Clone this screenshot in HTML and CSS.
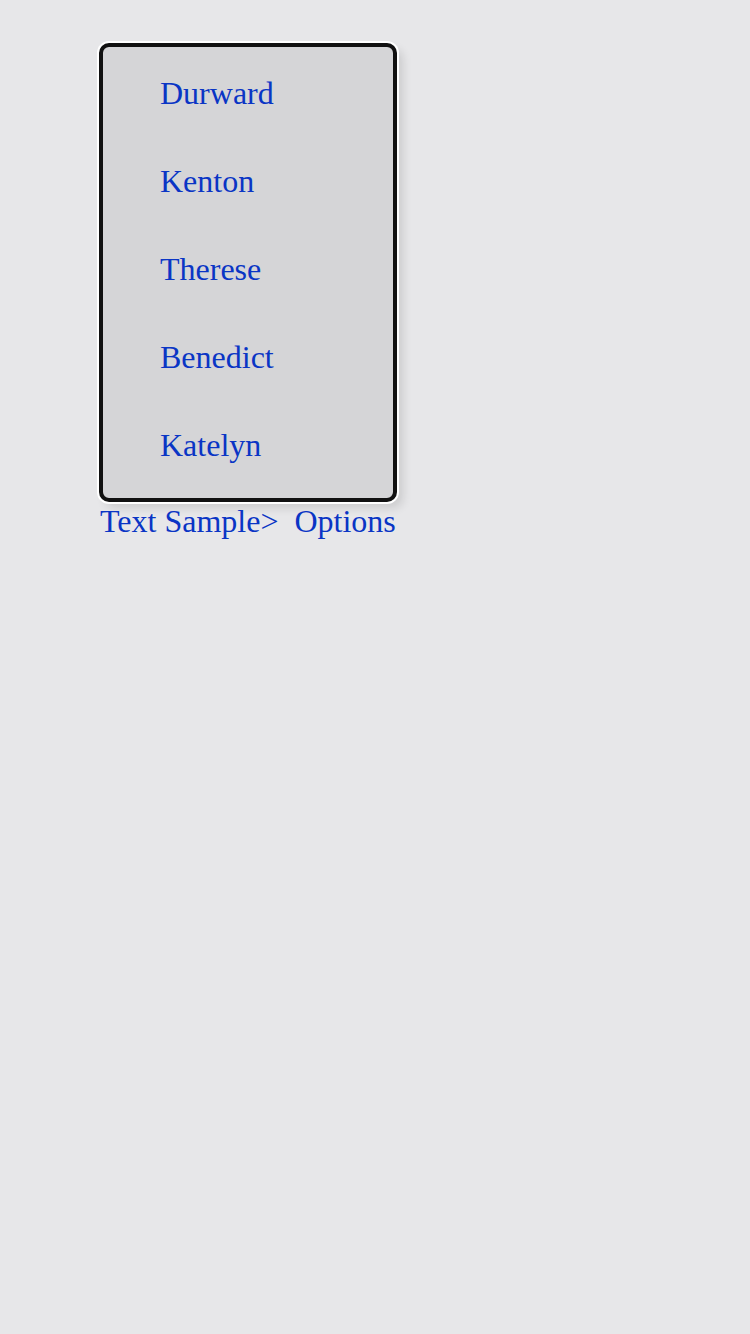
FILE: index.html
```html
<!DOCTYPE html>
<html>
<head>
<meta charset="utf-8">
<link rel="stylesheet" href="styles.css">
</head>
<body>
<div class="wrap">
  <ul class="menu">
    <li class="item">Durward</li>
    <li class="item">Kenton</li>
    <li class="item">Therese</li>
    <li class="item">Benedict</li>
    <li class="item">Katelyn</li>
  </ul>
  <div class="trail"><span>Text Sample&gt;</span> <span class="opt">Options</span></div>
</div>
</body>
</html>
```
FILE: styles.css
```css
html, body {
  margin: 0;
  padding: 0;
  background: #e7e7e9;
  height: 100%;
}
body {
  font-family: "Liberation Serif", "Times New Roman", serif;
  color: #0a35c5;
}
.wrap {
  padding: 43px 0 0 100px;
}
.menu {
  list-style: none;
  margin: 0 0 0 -1px;
  padding: 2px 0 9px 0;
  width: 290px;
  border: 4px solid #111;
  border-radius: 10px;
  background: #d5d5d7;
  box-shadow: 0 0 0 2px #fff, 6px 6px 10px rgba(0,0,0,0.12);
}
.item {
  font-size: 32px;
  line-height: 88px;
  padding-left: 57px;
}
.trail {
  font-size: 32px;
  line-height: 37px;
  margin-top: 1px;
  white-space: pre;
}
.opt {
  margin-left: 8px;
}
```
